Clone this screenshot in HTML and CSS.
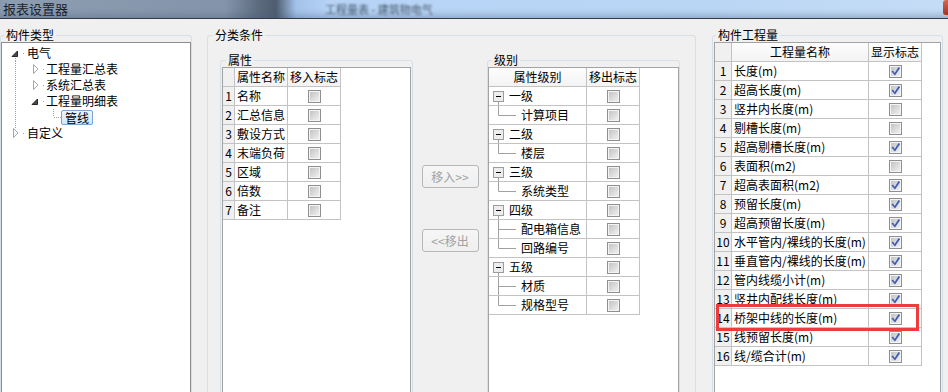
FILE: index.html
```html
<!DOCTYPE html>
<html lang="zh-CN">
<head>
<meta charset="utf-8">
<title>报表设置器</title>
<link rel="stylesheet" href="styles.css">
</head>
<body>
<div class="titlebar">
  <span class="title">报表设置器</span>
  <span class="bgtitle">工程量表 - 建筑物电气</span>
  <span class="close"></span>
</div>
<div class="dialog">
  <fieldset class="group g-type">
    <legend>构件类型</legend>
    <div class="tree">
      <div class="trow"><svg class="tw" width="25" height="16"><polygon points="15.5,6 15.5,11.5 10,11.5" fill="#4a4a4a" stroke="#262626" stroke-linejoin="round"/><rect x="21" y="8" width="1" height="1" fill="#a0a0a0"/><line x1="13.5" y1="13" x2="13.5" y2="16" stroke="#a0a0a0" stroke-dasharray="1 1"/></svg><span>电气</span></div>
      <div class="trow"><svg class="tw" width="44" height="16"><line x1="13.5" y1="0" x2="13.5" y2="16" stroke="#a0a0a0" stroke-dasharray="1 1"/><polygon points="31.5,3.5 36,8 31.5,12.5" fill="#fff" stroke="#a6a6a6" stroke-linejoin="round"/><rect x="41" y="8" width="1" height="1" fill="#a0a0a0"/></svg><span>工程量汇总表</span></div>
      <div class="trow"><svg class="tw" width="44" height="16"><line x1="13.5" y1="0" x2="13.5" y2="16" stroke="#a0a0a0" stroke-dasharray="1 1"/><polygon points="31.5,3.5 36,8 31.5,12.5" fill="#fff" stroke="#a6a6a6" stroke-linejoin="round"/><rect x="41" y="8" width="1" height="1" fill="#a0a0a0"/></svg><span>系统汇总表</span></div>
      <div class="trow"><svg class="tw" width="44" height="16"><line x1="13.5" y1="0" x2="13.5" y2="16" stroke="#a0a0a0" stroke-dasharray="1 1"/><polygon points="35.5,6 35.5,11.5 30,11.5" fill="#4a4a4a" stroke="#262626" stroke-linejoin="round"/><rect x="41" y="8" width="1" height="1" fill="#a0a0a0"/></svg><span>工程量明细表</span></div>
      <div class="trow"><svg class="tw" width="59" height="16"><line x1="13.5" y1="0" x2="13.5" y2="16" stroke="#a0a0a0" stroke-dasharray="1 1"/><line x1="51.5" y1="0" x2="51.5" y2="8" stroke="#a0a0a0" stroke-dasharray="1 1"/><line x1="52" y1="8.5" x2="59" y2="8.5" stroke="#a0a0a0" stroke-dasharray="1 1"/></svg><span class="sel">管线</span></div>
      <div class="trow"><svg class="tw" width="25" height="16"><line x1="13.5" y1="0" x2="13.5" y2="3" stroke="#a0a0a0" stroke-dasharray="1 1"/><polygon points="11.5,3.5 16,8 11.5,12.5" fill="#fff" stroke="#a6a6a6" stroke-linejoin="round"/><rect x="21" y="8" width="1" height="1" fill="#a0a0a0"/></svg><span>自定义</span></div>
    </div>
  </fieldset>

  <fieldset class="group g-cond">
    <legend>分类条件</legend>
    <div class="cond-body">
      <fieldset class="group g-attr">
        <legend>属性</legend>
        <div class="list">
          <div class="grid attr-grid">
            <div class="c num hd"></div><div class="c hd">属性名称</div><div class="c hd">移入标志</div>
            <div class="c num">1</div><div class="c nm">名称</div><div class="c mk"><span class="cb"></span></div>
            <div class="c num">2</div><div class="c nm">汇总信息</div><div class="c mk"><span class="cb"></span></div>
            <div class="c num">3</div><div class="c nm">敷设方式</div><div class="c mk"><span class="cb"></span></div>
            <div class="c num">4</div><div class="c nm">末端负荷</div><div class="c mk"><span class="cb"></span></div>
            <div class="c num">5</div><div class="c nm">区域</div><div class="c mk"><span class="cb"></span></div>
            <div class="c num">6</div><div class="c nm">倍数</div><div class="c mk"><span class="cb"></span></div>
            <div class="c num">7</div><div class="c nm">备注</div><div class="c mk"><span class="cb"></span></div>
          </div>
        </div>
      </fieldset>

      <div class="btncol">
        <button class="btn" disabled>移入&gt;&gt;</button>
        <button class="btn" disabled>&lt;&lt;移出</button>
      </div>

      <fieldset class="group g-level">
        <legend>级别</legend>
        <div class="list">
          <div class="grid level-grid">
            <div class="c hd">属性级别</div><div class="c hd">移出标志</div>
            <div class="c lv"><svg width="20" height="18"><rect x="4.5" y="4.5" width="10" height="10" fill="#ededed" stroke="#9c9c9c"/><line x1="7" y1="9.5" x2="12" y2="9.5" stroke="#000"/><line x1="9.5" y1="15" x2="9.5" y2="18" stroke="#a0a0a0"/></svg><span>一级</span></div><div class="c mk"><span class="cb"></span></div>
            <div class="c lv"><svg width="32" height="18"><path d="M9.5 0V9.5H27" stroke="#a0a0a0" fill="none"/></svg><span>计算项目</span></div><div class="c mk"><span class="cb"></span></div>
            <div class="c lv"><svg width="20" height="18"><rect x="4.5" y="4.5" width="10" height="10" fill="#ededed" stroke="#9c9c9c"/><line x1="7" y1="9.5" x2="12" y2="9.5" stroke="#000"/><line x1="9.5" y1="15" x2="9.5" y2="18" stroke="#a0a0a0"/></svg><span>二级</span></div><div class="c mk"><span class="cb"></span></div>
            <div class="c lv"><svg width="32" height="18"><path d="M9.5 0V9.5H27" stroke="#a0a0a0" fill="none"/></svg><span>楼层</span></div><div class="c mk"><span class="cb"></span></div>
            <div class="c lv"><svg width="20" height="18"><rect x="4.5" y="4.5" width="10" height="10" fill="#ededed" stroke="#9c9c9c"/><line x1="7" y1="9.5" x2="12" y2="9.5" stroke="#000"/><line x1="9.5" y1="15" x2="9.5" y2="18" stroke="#a0a0a0"/></svg><span>三级</span></div><div class="c mk"><span class="cb"></span></div>
            <div class="c lv"><svg width="32" height="18"><path d="M9.5 0V9.5H27" stroke="#a0a0a0" fill="none"/></svg><span>系统类型</span></div><div class="c mk"><span class="cb"></span></div>
            <div class="c lv"><svg width="20" height="18"><rect x="4.5" y="4.5" width="10" height="10" fill="#ededed" stroke="#9c9c9c"/><line x1="7" y1="9.5" x2="12" y2="9.5" stroke="#000"/><line x1="9.5" y1="15" x2="9.5" y2="18" stroke="#a0a0a0"/></svg><span>四级</span></div><div class="c mk"><span class="cb"></span></div>
            <div class="c lv"><svg width="32" height="18"><path d="M9.5 0V18M9.5 9.5H27" stroke="#a0a0a0" fill="none"/></svg><span>配电箱信息</span></div><div class="c mk"><span class="cb"></span></div>
            <div class="c lv"><svg width="32" height="18"><path d="M9.5 0V9.5H27" stroke="#a0a0a0" fill="none"/></svg><span>回路编号</span></div><div class="c mk"><span class="cb"></span></div>
            <div class="c lv"><svg width="20" height="18"><rect x="4.5" y="4.5" width="10" height="10" fill="#ededed" stroke="#9c9c9c"/><line x1="7" y1="9.5" x2="12" y2="9.5" stroke="#000"/><line x1="9.5" y1="15" x2="9.5" y2="18" stroke="#a0a0a0"/></svg><span>五级</span></div><div class="c mk"><span class="cb"></span></div>
            <div class="c lv"><svg width="32" height="18"><path d="M9.5 0V18M9.5 9.5H27" stroke="#a0a0a0" fill="none"/></svg><span>材质</span></div><div class="c mk"><span class="cb"></span></div>
            <div class="c lv"><svg width="32" height="18"><path d="M9.5 0V9.5H27" stroke="#a0a0a0" fill="none"/></svg><span>规格型号</span></div><div class="c mk"><span class="cb"></span></div>
          </div>
        </div>
      </fieldset>
    </div>
  </fieldset>

  <fieldset class="group g-qty">
    <legend>构件工程量</legend>
    <div class="list qty-list">
      <div class="grid qty-grid">
        <div class="c num hd"></div><div class="c hd">工程量名称</div><div class="c hd">显示标志</div>
        <div class="c num">1</div><div class="c nm">长度(m)</div><div class="c mk"><span class="cb on"><svg width="11" height="11"><path d="M1.5 5.6L3 4.6L4.7 6.9L8.6 1L10.1 2L5 9.6Z" fill="#3b5bb3"/></svg></span></div>
        <div class="c num">2</div><div class="c nm">超高长度(m)</div><div class="c mk"><span class="cb on"><svg width="11" height="11"><path d="M1.5 5.6L3 4.6L4.7 6.9L8.6 1L10.1 2L5 9.6Z" fill="#3b5bb3"/></svg></span></div>
        <div class="c num">3</div><div class="c nm">竖井内长度(m)</div><div class="c mk"><span class="cb"></span></div>
        <div class="c num">4</div><div class="c nm">剔槽长度(m)</div><div class="c mk"><span class="cb"></span></div>
        <div class="c num">5</div><div class="c nm">超高剔槽长度(m)</div><div class="c mk"><span class="cb on"><svg width="11" height="11"><path d="M1.5 5.6L3 4.6L4.7 6.9L8.6 1L10.1 2L5 9.6Z" fill="#3b5bb3"/></svg></span></div>
        <div class="c num">6</div><div class="c nm">表面积(m2)</div><div class="c mk"><span class="cb"></span></div>
        <div class="c num">7</div><div class="c nm">超高表面积(m2)</div><div class="c mk"><span class="cb on"><svg width="11" height="11"><path d="M1.5 5.6L3 4.6L4.7 6.9L8.6 1L10.1 2L5 9.6Z" fill="#3b5bb3"/></svg></span></div>
        <div class="c num">8</div><div class="c nm">预留长度(m)</div><div class="c mk"><span class="cb on"><svg width="11" height="11"><path d="M1.5 5.6L3 4.6L4.7 6.9L8.6 1L10.1 2L5 9.6Z" fill="#3b5bb3"/></svg></span></div>
        <div class="c num">9</div><div class="c nm">超高预留长度(m)</div><div class="c mk"><span class="cb on"><svg width="11" height="11"><path d="M1.5 5.6L3 4.6L4.7 6.9L8.6 1L10.1 2L5 9.6Z" fill="#3b5bb3"/></svg></span></div>
        <div class="c num">10</div><div class="c nm">水平管内/裸线的长度(m)</div><div class="c mk"><span class="cb on"><svg width="11" height="11"><path d="M1.5 5.6L3 4.6L4.7 6.9L8.6 1L10.1 2L5 9.6Z" fill="#3b5bb3"/></svg></span></div>
        <div class="c num">11</div><div class="c nm">垂直管内/裸线的长度(m)</div><div class="c mk"><span class="cb on"><svg width="11" height="11"><path d="M1.5 5.6L3 4.6L4.7 6.9L8.6 1L10.1 2L5 9.6Z" fill="#3b5bb3"/></svg></span></div>
        <div class="c num">12</div><div class="c nm">管内线缆小计(m)</div><div class="c mk"><span class="cb on"><svg width="11" height="11"><path d="M1.5 5.6L3 4.6L4.7 6.9L8.6 1L10.1 2L5 9.6Z" fill="#3b5bb3"/></svg></span></div>
        <div class="c num">13</div><div class="c nm">竖井内配线长度(m)</div><div class="c mk"><span class="cb on"><svg width="11" height="11"><path d="M1.5 5.6L3 4.6L4.7 6.9L8.6 1L10.1 2L5 9.6Z" fill="#3b5bb3"/></svg></span></div>
        <div class="c num">14</div><div class="c nm">桥架中线的长度(m)</div><div class="c mk"><span class="cb on"><svg width="11" height="11"><path d="M1.5 5.6L3 4.6L4.7 6.9L8.6 1L10.1 2L5 9.6Z" fill="#3b5bb3"/></svg></span></div>
        <div class="c num">15</div><div class="c nm">线预留长度(m)</div><div class="c mk"><span class="cb on"><svg width="11" height="11"><path d="M1.5 5.6L3 4.6L4.7 6.9L8.6 1L10.1 2L5 9.6Z" fill="#3b5bb3"/></svg></span></div>
        <div class="c num">16</div><div class="c nm">线/缆合计(m)</div><div class="c mk"><span class="cb on"><svg width="11" height="11"><path d="M1.5 5.6L3 4.6L4.7 6.9L8.6 1L10.1 2L5 9.6Z" fill="#3b5bb3"/></svg></span></div>
      </div>
      <div class="highlight"></div>
    </div>
  </fieldset>
</div>
</body>
</html>
```

FILE: styles.css
```css
* { box-sizing: border-box; }

html, body {
  margin: 0;
  padding: 0;
}

body {
  width: 948px;
  height: 392px;
  overflow: hidden;
  background: #f0f0f0;
  font-family: "Noto Sans CJK SC", "Liberation Sans", sans-serif;
  font-size: 12px;
  color: #000;
}

/* ---------- title bar ---------- */
.titlebar {
  height: 19px;
  border-bottom: 1px solid #333a44;
  display: flex;
  align-items: flex-start;
  padding-top: 2px;
  background: linear-gradient(90deg, #8c9cb1 0, #8495ab 225px, #5d6b7f 258px, #4f5d71 276px, #a3c2e9 296px, #b6d3f6 330px, #bad6f5 700px, #c5dcf5 948px);
  box-shadow: inset 0 -6px 6px -3px rgba(70, 90, 120, 0.35);
}

.title {
  flex: none;
  width: 322px;
  margin-left: 3px;
  font-size: 13px;
  line-height: 14px;
  color: #1b222b;
  white-space: nowrap;
}

.bgtitle {
  flex: none;
  margin-top: 1px;
  font-size: 11px;
  line-height: 12px;
  color: #4a5a6e;
  white-space: nowrap;
  filter: blur(0.9px);
}

.close {
  margin-left: auto;
  margin-top: -2px;
  width: 5px;
  height: 15px;
  border-radius: 3px 0 0 3px;
  background: linear-gradient(#d8674f, #a8301f);
}

/* ---------- dialog layout ---------- */
.dialog {
  display: flex;
  align-items: flex-start;
  padding-top: 9px;
}

.group {
  margin: 0;
  padding: 0;
  min-width: 0;
  border: 1px solid #d5dfe5;
  border-radius: 3px;
}

.group > legend {
  font-size: 12px;
  line-height: 14px;
  height: 14px;
  padding: 0 2px;
  margin-left: 3px;
}

.g-type {
  width: 192px;
  height: 380px;
}

.g-cond {
  width: 489px;
  height: 380px;
  margin-left: 15px;
}
.g-cond > legend { margin-left: 5px; }

.cond-body {
  display: flex;
  align-items: flex-start;
  padding: 11px 15px 0 12px;
}

.g-attr {
  width: 193px;
  height: 360px;
  padding: 0 1px;
}
.g-attr > legend { margin-left: 4px; }

.g-level {
  width: 193px;
  height: 360px;
}
.g-level > legend { margin-left: 4px; }

.g-qty {
  width: 231px;
  height: 380px;
  margin-left: 16px;
  padding: 0 1px;
}
.g-qty > legend { margin-left: 2px; }

/* ---------- tree ---------- */
.tree {
  height: 360px;
  background: #fff;
  border: 1px solid #8b8d90;
  padding-top: 2px;
}

.trow {
  display: flex;
  align-items: center;
  height: 16px;
  line-height: 16px;
  white-space: nowrap;
}

.tw {
  flex: none;
  display: block;
}

.sel {
  height: 15px;
  line-height: 13px;
  padding: 0 3px;
  border: 1px solid #7da2ce;
  border-radius: 2px;
  background: linear-gradient(#eef5fd, #d5e6fa);
}

/* ---------- list boxes & grids ---------- */
.list {
  height: 340px;
  background: #fff;
  border: 1px solid #a3a3a3;
}

.qty-list {
  position: relative;
  height: 360px;
}

.grid {
  display: grid;
}

.attr-grid { grid-template-columns: 12px 53px 53px; width: 118px; }
.level-grid { grid-template-columns: 98px 53px; width: 151px; }
.qty-grid { grid-template-columns: 17px 137px 53px; width: 207px; }

.c {
  height: 19px;
  line-height: 18px;
  border-right: 1px solid #c3c3c3;
  border-bottom: 1px solid #c3c3c3;
  white-space: nowrap;
  overflow: hidden;
}

.hd {
  text-align: center;
  background: linear-gradient(#fdfdfd, #f3f3f3);
}

.num {
  text-align: center;
  background: #f0f0f0;
}

.nm {
  padding-left: 2px;
}

.lv {
  display: flex;
  align-items: center;
}
.lv svg { flex: none; display: block; }

.mk {
  display: flex;
  align-items: center;
  justify-content: center;
}

.cb {
  width: 13px;
  height: 13px;
  border: 1px solid #8f8f8f;
  background: linear-gradient(135deg, #bfbfbf, #f4f4f4);
  box-shadow: inset 0 0 0 1px #f4f4f4;
  display: block;
}
.cb svg { display: block; }

/* ---------- buttons ---------- */
.btncol {
  width: 74px;
  flex: none;
  display: flex;
  flex-direction: column;
  align-items: center;
  gap: 41px;
  padding-top: 112px;
}

.btn {
  width: 57px;
  height: 23px;
  padding: 0;
  font-family: inherit;
  font-size: 12px;
  color: #a2a2a2;
  border: 1px solid #b4b8bb;
  border-radius: 3px;
  background: linear-gradient(#f6f6f6, #efefef);
}

/* ---------- highlight overlay ---------- */
.highlight {
  position: absolute;
  left: 1px;
  top: 261px;
  width: 203px;
  height: 27px;
  border: 3px solid #ef3b3b;
  pointer-events: none;
}
```
